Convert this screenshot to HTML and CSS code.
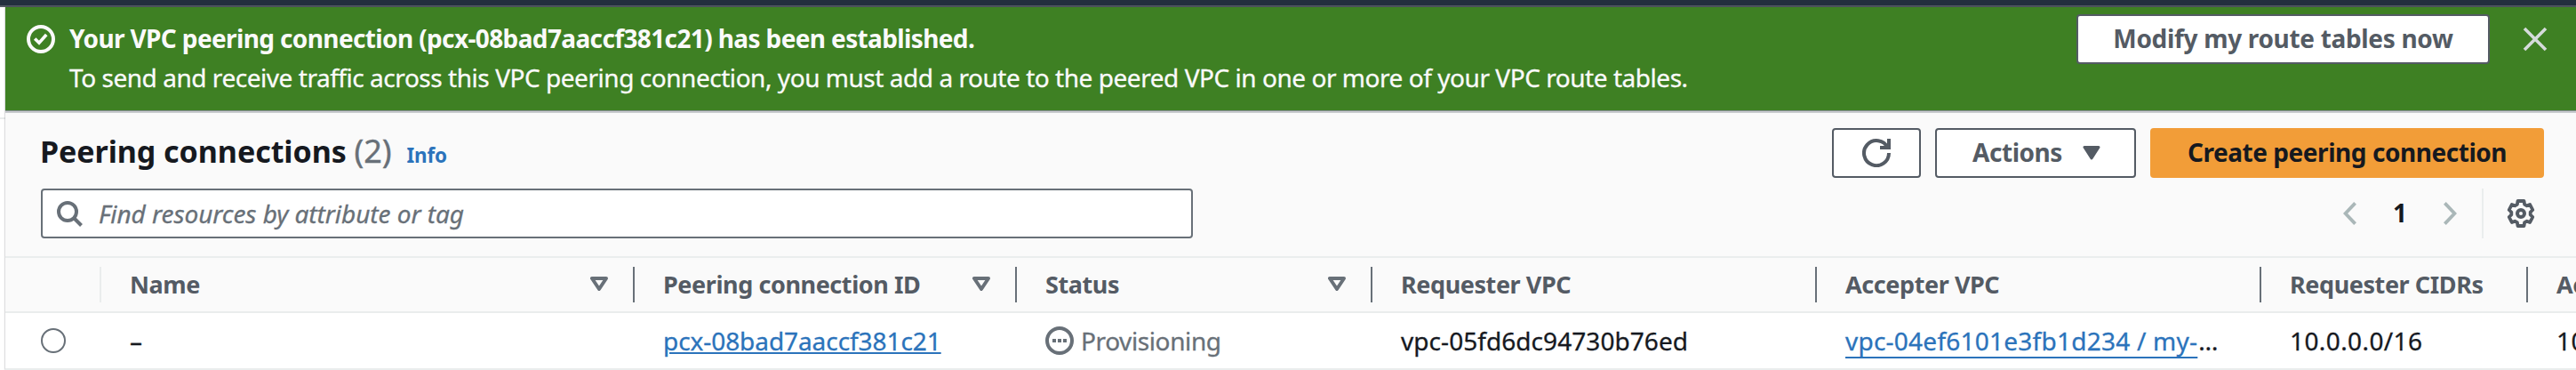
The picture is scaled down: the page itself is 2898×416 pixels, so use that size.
FILE: index.html
```html
<!DOCTYPE html>
<html lang="en">
<head>
<meta charset="utf-8">
<title>Peering connections</title>
<link rel="stylesheet" href="styles.css">
</head>
<body>
<div class="topbar"></div>
<div class="shell">
  <aside class="sidebar"><div class="sidebar-rule"></div></aside>
  <main class="panel">
    <section class="flash">
      <svg class="icon flash-icon" viewBox="0 0 32 32"><circle cx="16" cy="16" r="14" stroke-width="4"/><path d="M9.2 15.4 14 20.2 22.2 11" stroke-width="3.6"/></svg>
      <div class="flash-text">
        <div class="flash-title">Your VPC peering connection (pcx-08bad7aaccf381c21) has been established.</div>
        <div class="flash-desc">To send and receive traffic across this VPC peering connection, you must add a route to the peered VPC in one or more of your VPC route tables.</div>
      </div>
      <button class="btn btn-modify">Modify my route tables now</button>
      <svg class="icon close" viewBox="0 0 28 28"><path d="M2 2 26 26M26 2 2 26" stroke-width="3.6"/></svg>
    </section>
    <header class="head">
      <h1 class="title">Peering connections <span class="count">(2)</span><a class="info">Info</a></h1>
      <div class="actions">
        <button class="btn btn-refresh"><svg class="icon icon-32" viewBox="0 0 16 16"><path d="M10 5h5V0M15 8a7 7 0 1 1-.7-3" stroke-width="2"/></svg></button>
        <button class="btn btn-actions">Actions<svg class="caret" viewBox="0 0 20 16"><path d="M2 1.5h16L10 14z"/></svg></button>
        <button class="btn btn-primary">Create peering connection</button>
      </div>
    </header>
    <div class="tools">
      <div class="search">
        <svg class="icon search-icon" viewBox="0 0 29 29"><circle cx="12" cy="12" r="10" stroke-width="4"/><path d="M19 19 27.5 27.5" stroke-width="4"/></svg>
        <span class="placeholder">Find resources by attribute or tag</span>
      </div>
      <div class="pager">
        <svg class="icon chevron" viewBox="0 0 15 26"><path d="M13.6 1.4 2.6 13l11 11.6" stroke-width="3.8"/></svg>
        <span class="page">1</span>
        <svg class="icon chevron" viewBox="0 0 15 26"><path d="M1.4 1.4 12.4 13l-11 11.6" stroke-width="3.8"/></svg>
        <div class="prefs"><svg class="icon icon-32" viewBox="0 0 32 32"><path stroke-linejoin="round" stroke-width="3.8" d="M12.5 2h7l.6 3.8 2.7 1.5L26.2 6l3.1 6-2.6 2.5v3l2.6 2.5-3.1 6-3.4-1.3-2.7 1.5-.6 3.8h-7l-.6-3.8-2.7-1.5L5.8 26l-3.1-6 2.6-2.5v-3L2.7 12l3.1-6 3.4 1.3 2.7-1.5z"/><circle cx="16" cy="16" r="4" stroke-width="4"/></svg></div>
      </div>
    </div>
    <div class="table">
      <div class="row row-head">
        <div class="cell divider-light"></div>
        <div class="cell">Name<svg class="icon sort" viewBox="0 0 20 16"><path d="M2 2h16L10 14z" stroke-width="4"/></svg></div>
        <div class="cell">Peering connection ID<svg class="icon sort" viewBox="0 0 20 16"><path d="M2 2h16L10 14z" stroke-width="4"/></svg></div>
        <div class="cell">Status<svg class="icon sort" viewBox="0 0 20 16"><path d="M2 2h16L10 14z" stroke-width="4"/></svg></div>
        <div class="cell">Requester VPC</div>
        <div class="cell">Accepter VPC</div>
        <div class="cell">Requester CIDRs</div>
        <div class="cell">Ac</div>
      </div>
      <div class="row row-body">
        <div class="cell cell-radio"><span class="radio"></span></div>
        <div class="cell">–</div>
        <div class="cell"><a class="link link-id">pcx-08bad7aaccf381c21</a></div>
        <div class="cell status"><svg class="icon icon-32" viewBox="0 0 32 32"><circle cx="16" cy="16" r="14" stroke-width="4"/><path d="M8 16h4M14 16h4M20 16h4" stroke-width="4"/></svg>Provisioning</div>
        <div class="cell vpc">vpc-05fd6dc94730b76ed</div>
        <div class="cell"><a class="link link-vpc">vpc-04ef6101e3fb1d234 / my-</a><span class="dots">…</span></div>
        <div class="cell cidr">10.0.0.0/16</div>
        <div class="cell cidr">10</div>
      </div>
    </div>
  </main>
</div>
</body>
</html>
```
FILE: styles.css
```css
* { box-sizing: border-box; }
body {
  margin: 0;
  width: 2898px;
  height: 416px;
  overflow: hidden;
  background: #fff;
  color: #16191f;
  font-family: "Noto Sans", "Open Sans", sans-serif;
  font-size: 28px;
  white-space: nowrap;
}
.icon { display: block; flex: none; fill: none; stroke: currentColor; }
.icon-32 { width: 32px; height: 32px; }

.topbar { height: 8px; background: #232f3e; border-bottom: 2px solid #545b64; }
.shell { display: flex; height: 408px; }
.sidebar { width: 6px; padding-top: 124px; }
.sidebar-rule { height: 2px; background: #eaeded; }
.panel {
  flex: 1;
  min-width: 0;
  overflow: hidden;
  background: #fafafa;
  box-shadow: 0 0 2px 0 rgba(0, 7, 22, .4);
}

.flash {
  display: flex;
  height: 119px;
  padding: 8px 32px 0 24px;
  color: #fafafa;
  background: #3e8023;
  border-bottom: 2px solid #c8cbce;
  box-shadow: inset 0 -1px 0 #878f92;
}
.flash-icon { width: 32px; height: 32px; margin-top: 12px; }
.flash-text { flex: 1; margin-left: 16px; padding-top: 5px; line-height: 44px; }
.flash-title { font-weight: 700; letter-spacing: -.625px; }
.flash-desc { letter-spacing: -.458px; -webkit-text-stroke: .3px; }
.close { width: 28px; height: 28px; margin: 14px 0 0 37px; color: #d5dbdb; }

.btn {
  display: flex;
  align-items: center;
  justify-content: center;
  height: 56px;
  padding: 0 0 2px;
  border: 2px solid #545b64;
  border-radius: 4px;
  background: #fff;
  color: #545b64;
  font: inherit;
  font-weight: 700;
  letter-spacing: -.45px;
}
.btn-modify { width: 465px; letter-spacing: -.32px; }
.btn-refresh { width: 100px; padding: 0; }
.btn-actions { width: 226px; gap: 23px; padding-left: 2px; }
.btn-primary { width: 443px; color: #16191f; background: #f29d38; border-color: #f29d38; }
.caret { width: 20px; height: 16px; margin-top: 2px; fill: currentColor; stroke: currentColor; stroke-width: 3; stroke-linejoin: round; }

.head { display: flex; justify-content: space-between; height: 85px; padding: 17px 36px 0 38px; }
.title { margin: 0; padding-left: 1px; font-size: 34px; line-height: 52px; letter-spacing: -.05px; }
.count { color: #687078; font-weight: 400; font-size: 36px; line-height: 1; -webkit-text-stroke: .4px; }
.info { margin-left: 17px; color: #2b73bb; font-size: 22.4px; letter-spacing: -.2px; }
.actions { display: flex; gap: 16px; }

.tools { display: flex; justify-content: space-between; height: 76px; padding: 0 46px 0 40px; }
.search {
  display: flex;
  align-items: center;
  width: 1296px;
  height: 56px;
  padding-left: 16px;
  border: 2px solid #687078;
  border-radius: 4px;
  background: #fff;
  color: #687078;
}
.search-icon { width: 29px; height: 29px; }
.placeholder { margin-left: 18px; font-style: italic; letter-spacing: -.06px; -webkit-text-stroke: .3px; }
.pager { display: flex; align-items: center; height: 56px; color: #16191f; font-weight: 700; }
.chevron { width: 15px; height: 26px; color: #aab7b8; }
.page { width: 98px; padding-bottom: 2px; text-align: center; }
.prefs { display: flex; align-items: center; height: 56px; margin-left: 28px; padding-left: 26px; border-left: 2px solid #eaeded; color: #545b64; }

.row {
  display: grid;
  grid-template-columns: 108px 600px 430px 400px 500px 500px 300px 300px;
  border-top: 2px solid #eaeded;
}
.cell { display: flex; align-items: center; padding: 0 30px 0 32px; }
.row-head { height: 62px; color: #545b64; font-size: 27px; font-weight: 700; letter-spacing: -.42px; }
.row-head .cell {
  justify-content: space-between;
  padding-bottom: 2px;
  background: linear-gradient(#687078, #687078) right center / 2px 40px no-repeat;
}
.row-head .divider-light { background-image: linear-gradient(#eaeded, #eaeded); }
.sort { width: 20px; height: 16px; stroke-linejoin: round; color: #687078; }
.row-body { height: 66px; background: #fff; border-bottom: 2px solid #eaeded; -webkit-text-stroke: .3px; }
.cell-radio { padding-left: 40px; }
.radio { width: 28px; height: 28px; border: 2px solid #687078; border-radius: 50%; }
.link { color: #2b73bb; text-decoration: underline 2px; }
.link-id { letter-spacing: -.07px; text-underline-offset: 2px; }
.link-vpc { letter-spacing: .24px; text-underline-offset: 7px; text-decoration-skip-ink: none; }
.status { gap: 8px; color: #687078; letter-spacing: -.4px; }
.vpc { letter-spacing: .06px; }
.cidr { letter-spacing: .4px; }
.dots { margin-left: 1px; letter-spacing: .8px; }
```
